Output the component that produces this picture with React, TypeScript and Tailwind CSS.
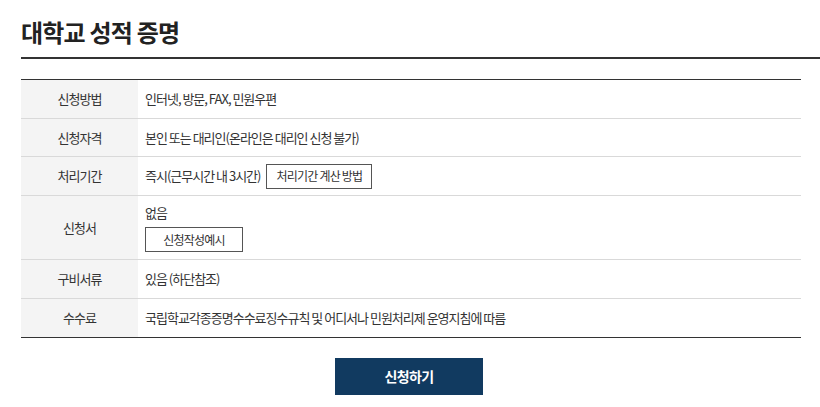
const rows = [
  { label: "신청방법", value: "인터넷, 방문, FAX, 민원우편", h: "h-[39px]" },
  { label: "신청자격", value: "본인 또는 대리인(온라인은 대리인 신청 불가)", h: "h-[38px]" },
  { label: "처리기간", value: "즉시(근무시간 내 3시간)", button: "처리기간 계산 방법", h: "h-[39px]" },
  { label: "신청서", value: "없음", below: "신청작성예시", h: "h-[64px]" },
  { label: "구비서류", value: "있음 (하단참조)", h: "h-[39px]" },
  { label: "수수료", value: "국립학교각종증명수수료징수규칙 및 어디서나 민원처리제 운영지침에 따름", h: "h-[38px]" },
]

const App = () => {
  return (
    <div
      className="w-[820px] h-[407px] bg-white pl-[21px] text-[#333]"
      style={{ fontFamily: '"Noto Sans CJK KR", "Noto Sans", sans-serif' }}
    >
      {/* title */}
      <div className="h-[59px] pt-[7px] flex items-center border-b-2 border-[#333]">
        <h1 className="text-[24px] font-bold tracking-[-0.8px] text-[#222] leading-[30px]">대학교 성적 증명</h1>
      </div>

      {/* info table */}
      <div className="mt-[20px] w-[780px] border-t border-b border-[#333]">
        {rows.map((row, i) => (
          <div
            key={row.label}
            className={`flex ${i < rows.length - 1 ? "border-b border-[#d9d9d9]" : ""} ${row.h}`}
          >
            <div className="w-[117px] shrink-0 bg-[#f4f4f4] flex items-center justify-center text-[13px] tracking-[-1px]">
              {row.label}
            </div>
            {row.below ? (
              <div className="flex flex-col justify-center pl-[7px] gap-[4px]">
                <p className="text-[13px] tracking-[-1px] leading-[20px]">{row.value}</p>
                <button
                  type="button"
                  className="w-[98px] h-[25px] border border-[#555] bg-white text-[12px] tracking-[-0.8px] text-[#333]"
                >
                  {row.below}
                </button>
              </div>
            ) : (
              <div className="flex items-center pl-[7px] gap-[6px]">
                <p className="text-[13px] tracking-[-1px]">{row.value}</p>
                {row.button && (
                  <button
                    type="button"
                    className="w-[106px] h-[25px] border border-[#555] bg-white text-[12px] tracking-[-0.8px] text-[#333]"
                  >
                    {row.button}
                  </button>
                )}
              </div>
            )}
          </div>
        ))}
      </div>

      {/* submit */}
      <div className="w-[780px] flex justify-center mt-[20px]">
        <button
          type="button"
          className="w-[148px] h-[37px] bg-[#113a60] text-white font-bold text-[14px] tracking-[-0.6px] -ml-[4px]"
        >
          신청하기
        </button>
      </div>
    </div>
  )
}

export default App
